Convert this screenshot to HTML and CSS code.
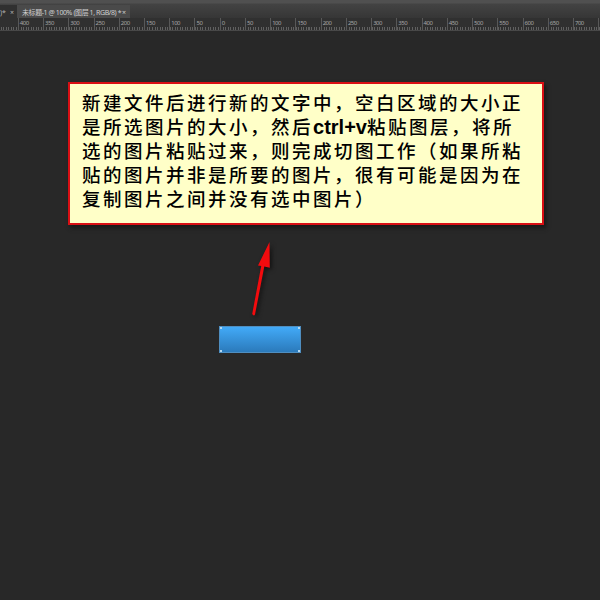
FILE: index.html
```
<!DOCTYPE html>
<html lang="zh-CN">
<head>
<meta charset="utf-8">
<title>未标题-1</title>
<link rel="stylesheet" href="styles.css">
</head>
<body>
<header class="tabs">
  <div class="tab-prev"><span>)*</span><span>×</span></div>
  <div class="tab"><span class="tab-name">未标题-1 @ 100% (图层 1, RGB/8) *</span><span>×</span></div>
</header>
<div class="ruler">
  <div class="mark"></div><div class="mark">400</div><div class="mark">350</div><div class="mark">300</div><div class="mark">250</div><div class="mark">200</div><div class="mark">150</div><div class="mark">100</div><div class="mark">50</div><div class="mark">0</div><div class="mark">50</div><div class="mark">100</div><div class="mark">150</div><div class="mark">200</div><div class="mark">250</div><div class="mark">300</div><div class="mark">350</div><div class="mark">400</div><div class="mark">450</div><div class="mark">500</div><div class="mark">550</div><div class="mark">600</div><div class="mark">650</div><div class="mark">700</div><div class="mark"></div>
</div>
<main class="canvas">
  <div class="note">新建文件后进行新的文字中，空白区域的大小正<br>是所选图片的大小，然后<span class="latin">ctrl+v</span>粘贴图层，将所<br>选的图片粘贴过来，则完成切图工作（如果所粘<br>贴的图片并非是所要的图片，很有可能是因为在<br>复制图片之间并没有选中图片）</div>
  <svg class="arrow" width="40" height="84" viewBox="0 0 40 84">
    <path d="M29.5 5 29.8 30.8 24.3 29.6 15 77.5Q13.8 79.5 12.2 77L21.2 29 18 28.4Z" fill="#f30b0e"/>
  </svg>
  <div class="layer"><i></i><i></i><i></i><i></i></div>
</main>
</body>
</html>
```
FILE: styles.css
```
* { box-sizing: border-box; }
body {
  margin: 0;
  width: 600px;
  height: 600px;
  overflow: hidden;
  background: #282828;
  font-family: "Liberation Sans", "Noto Sans CJK SC", sans-serif;
}
.tabs {
  display: flex;
  height: 18px;
  padding-top: 5px;
  background: linear-gradient(#505050 0 3px, #434343 4px, #363636 18px);
  color: #b5b5b5;
  font: 7px/15px "Noto Sans", "Noto Sans CJK SC", sans-serif;
  white-space: nowrap;
}
.tab-prev {
  display: flex;
  justify-content: space-between;
  width: 17px;
  padding-right: 3px;
  background: #303030;
}
.tab {
  display: flex;
  justify-content: space-between;
  width: 113px;
  padding: 0 4px 0 5px;
  background: #4a4a4a;
  color: #d0d0d0;
}
.tab-name { letter-spacing: -0.42px; }
.ruler {
  display: flex;
  height: 13px;
  margin-left: -7.4px;
  width: 632px;
  background:
    repeating-linear-gradient(90deg, #606060 0 1px, transparent 1px 2.524px) 0 9px / 100% 3px no-repeat,
    linear-gradient(#303030, #303030);
  border-bottom: 1px solid #484848;
}
.mark {
  flex: none;
  width: 25.24px;
  padding-left: 1px;
  border-left: 1px solid #585858;
  color: #a5a5a5;
  font: 6px/11px "Noto Sans", sans-serif;
  letter-spacing: -0.5px;
}
.canvas {
  display: flex;
  flex-direction: column;
  align-items: flex-start;
  padding-top: 51px;
}
.note {
  width: 476px;
  height: 143px;
  margin-left: 68px;
  padding: 6px 0 0 12px;
  border: 2px solid #d90f14;
  background: #ffffc8;
  box-shadow: 2px 3px 4px #181818;
  color: #000;
  font-weight: 500;
  font-size: 18.5px;
  line-height: 24px;
  font-family: "Noto Sans CJK SC", sans-serif;
  letter-spacing: 2.5px;
  white-space: nowrap;
}
.latin {
  font: bold 20px/20px "Liberation Sans", sans-serif;
  letter-spacing: 0;
}
.arrow {
  margin: 12px 0 0 240px;
  filter: drop-shadow(2px 2px 2px #111);
}
.layer {
  display: grid;
  grid-template-columns: 2px 2px;
  justify-content: space-between;
  align-content: space-between;
  width: 82px;
  height: 27px;
  margin: 5px 0 0 219px;
  border: 1px solid #4f8ec0;
  background: linear-gradient(#42aaf8, #2b7abb);
}
.layer i { width: 2px; height: 2px; background: #b5d8ef; }
```
